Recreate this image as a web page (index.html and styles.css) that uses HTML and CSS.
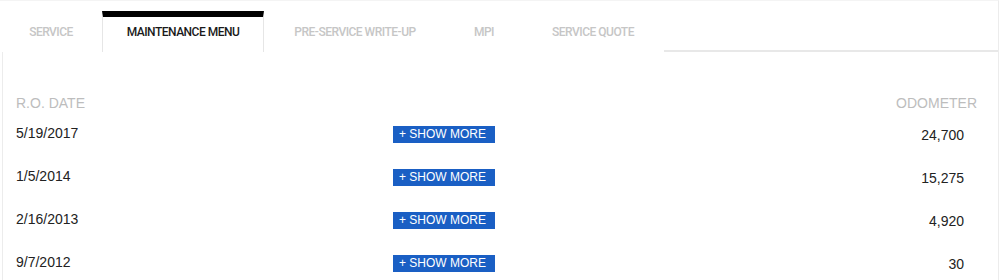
FILE: index.html
```html
<!DOCTYPE html>
<html lang="en">
<head>
    <meta charset="UTF-8">
    <title>Vehicle History</title>
    <link rel="stylesheet" href="styles.css">
</head>
<body>
    <div id="page">
        <div id="tabs">
            <div class="tab tab-service">SERVICE</div>
            <div class="tab tab-menu active">MAINTENANCE MENU</div>
            <div class="tab tab-writeup">PRE-SERVICE WRITE-UP</div>
            <div class="tab tab-mpi">MPI</div>
            <div class="tab tab-quote">SERVICE QUOTE</div>
            <div class="tab-rest"></div>
        </div>

        <div id="history">
            <div class="row head">
                <span class="date">R.O. DATE</span>
                <span></span>
                <span class="odo">ODOMETER</span>
            </div>
            <div class="row">
                <span class="date">5/19/2017</span>
                <span><button class="more">+ SHOW MORE</button></span>
                <span class="odo">24,700</span>
            </div>
            <div class="row">
                <span class="date">1/5/2014</span>
                <span><button class="more">+ SHOW MORE</button></span>
                <span class="odo">15,275</span>
            </div>
            <div class="row">
                <span class="date">2/16/2013</span>
                <span><button class="more">+ SHOW MORE</button></span>
                <span class="odo">4,920</span>
            </div>
            <div class="row">
                <span class="date">9/7/2012</span>
                <span><button class="more">+ SHOW MORE</button></span>
                <span class="odo">30</span>
            </div>
        </div>
    </div>
</body>
</html>
```

FILE: styles.css
```css
body {
    margin: 0;
    background: #fff;
    font-family: 'Liberation Sans', Arial, sans-serif;
    color: #222;
}

#page {
    height: 280px;
    border-top: 1px solid #f4f4f4;
    border-right: 1px solid #ececec;
    box-sizing: border-box;
    overflow: hidden;
}

#tabs {
    display: flex;
    height: 51px;
}

.tab {
    padding-top: 24px;
    font-family: Roboto, sans-serif;
    font-weight: 500;
    font-size: 12px;
    letter-spacing: -0.5px;
    text-align: center;
    white-space: nowrap;
    color: #c6c6c6;
    box-sizing: border-box;
}

.tab-service { width: 102px; }
.tab-menu { width: 162px; }
.tab-writeup { width: 182px; }
.tab-mpi { width: 76px; }
.tab-quote { width: 142px; }

.tab.active {
    color: #1a1a1a;
    border-top: 6px solid #000;
    border-left: 1px solid #e6e6e6;
    border-right: 1px solid #e6e6e6;
    margin-top: 10px;
    padding-top: 8px;
}

.tab-rest {
    flex-grow: 1;
    border-bottom: 2px solid #e8e8e8;
}

#history {
    margin-left: 2px;
    border-left: 1px solid #ececec;
    padding: 41px 0 0 13px;
}

.row {
    display: grid;
    grid-template-columns: 377px 1fr auto;
    align-items: center;
    height: 43px;
    font-size: 14px;
}

.row .date {
    align-self: start;
    padding-top: 12px;
}

.row.head {
    height: 20px;
    color: #bdbdbd;
}

.row.head .date {
    align-self: center;
    padding-top: 0;
}

.row .odo {
    padding-right: 34px;
    text-align: right;
}

.row.head .odo {
    padding-right: 21px;
}

.more {
    display: block;
    width: 102px;
    height: 17px;
    padding: 0 0 0 6px;
    border: none;
    background: #1a5fc4;
    color: #fff;
    font-family: 'Liberation Sans', Arial, sans-serif;
    font-size: 12px;
    text-align: left;
    line-height: 17px;
    cursor: pointer;
}
```
